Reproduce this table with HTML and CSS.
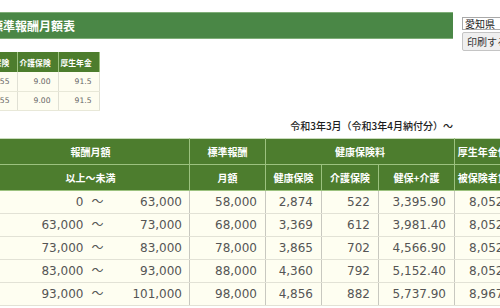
FILE: index.html
```html
<!DOCTYPE html>
<html lang="ja">
<head>
<meta charset="utf-8">
<link rel="stylesheet" href="styles.css">
</head>
<body>
<div class="page">
  <div class="top">
    <div class="title">標準報酬月額表</div>
    <div class="controls">
      <select class="pref"><option>愛知県</option></select>
      <button class="print">印刷する</button>
    </div>
  </div>

  <table class="rates">
    <tr class="rhead"><th>健康保険</th><th>介護保険</th><th>厚生年金</th></tr>
    <tr><td>49.55</td><td>9.00</td><td>91.5</td></tr>
    <tr><td>49.55</td><td>9.00</td><td>91.5</td></tr>
  </table>

  <div class="caption">令和3年3月（令和3年4月納付分）～</div>

  <table class="grade">
    <colgroup>
      <col class="c-a"><col class="c-b"><col class="c-c"><col class="c-d"><col class="c-e"><col class="c-f"><col class="c-g">
    </colgroup>
    <tr class="h1">
      <th colspan="2">報酬月額</th><th>標準報酬</th><th colspan="3">健康保険料</th><th>厚生年金保険料</th>
    </tr>
    <tr class="h2">
      <th colspan="2">以上～未満</th><th>月額</th><th>健康保険</th><th>介護保険</th><th>健保+介護</th><th>被保険者負担分</th>
    </tr>
    <tr><td class="lo">0<span class="t">～</span></td><td class="hi">63,000</td><td>58,000</td><td>2,874</td><td>522</td><td>3,395.90</td><td>8,052.00</td></tr>
    <tr><td class="lo">63,000<span class="t">～</span></td><td class="hi">73,000</td><td>68,000</td><td>3,369</td><td>612</td><td>3,981.40</td><td>8,052.00</td></tr>
    <tr><td class="lo">73,000<span class="t">～</span></td><td class="hi">83,000</td><td>78,000</td><td>3,865</td><td>702</td><td>4,566.90</td><td>8,052.00</td></tr>
    <tr><td class="lo">83,000<span class="t">～</span></td><td class="hi">93,000</td><td>88,000</td><td>4,360</td><td>792</td><td>5,152.40</td><td>8,052.00</td></tr>
    <tr><td class="lo">93,000<span class="t">～</span></td><td class="hi">101,000</td><td>98,000</td><td>4,856</td><td>882</td><td>5,737.90</td><td>8,967.00</td></tr>
  </table>
</div>
</body>
</html>
```

FILE: styles.css
```css
html, body {
  margin: 0;
  padding: 0;
  background: #ffffff;
  overflow: hidden;
}
body {
  font-family: "Noto Sans CJK JP", "DejaVu Sans", sans-serif;
}
.page {
  margin-left: -9px;
  padding-top: 12px;
  width: 560px;
}
.top {
  display: flex;
  align-items: flex-start;
}
.title {
  width: 462px;
  height: 27px;
  line-height: 27px;
  background: #4a8746;
  color: #ffffff;
  font-size: 12px;
  font-weight: bold;
  box-shadow: inset 0 1px 0 #7fae78, inset 0 -1px 0 #7fae78;
}
.controls {
  margin-left: 9px;
  padding-top: 5px;
  display: flex;
  flex-direction: column;
  gap: 2px;
}
.pref {
  appearance: none;
  -webkit-appearance: none;
  width: 64px;
  height: 13px;
  margin: 0;
  padding: 0 2px;
  border: 1px solid #a9a9a9;
  border-radius: 0;
  background: #ffffff;
  font-family: "Noto Sans CJK JP", sans-serif;
  font-size: 10px;
  line-height: 11px;
  color: #222;
}
.print {
  width: 64px;
  height: 19px;
  margin: 0;
  padding: 0 4px;
  border: 1px solid #c4c4c4;
  border-radius: 2px;
  background: #efefef;
  font-family: "Noto Sans CJK JP", sans-serif;
  font-size: 10px;
  color: #333;
  text-align: left;
}

/* small rate table */
.rates {
  margin-top: 1px;
  margin-left: -15px;
  border-collapse: collapse;
}
.rates th {
  width: 41px;
  height: 20px;
  padding: 0 2px;
  background: #4d7d2d;
  color: #ffffff;
  font-size: 7.8px;
  font-weight: bold;
  text-align: left;
  border-right: 1px solid #9cc27f;
  box-sizing: border-box;
}
.rates td {
  height: 19px;
  padding: 0 7px 0 0;
  background: #fefdf0;
  color: #666;
  font-family: "DejaVu Sans", sans-serif;
  font-size: 7.6px;
  text-align: right;
  border-right: 1px solid #e0e0d4;
  border-bottom: 1px solid #e8e8d8;
  box-sizing: border-box;
}

.caption {
  width: 462px;
  margin-top: 9px;
  margin-bottom: 6px;
  text-align: right;
  font-size: 10px;
  line-height: 12px;
  color: #1e1e1e;
  font-weight: 500;
}

/* main grade table */
.grade {
  border-collapse: collapse;
  table-layout: fixed;
  width: 539px;
  border-top: 1px solid #c9dcbc;
}
.c-a { width: 117px; }
.c-b { width: 81px; }
.c-c { width: 76px; }
.c-d { width: 56px; }
.c-e { width: 57px; }
.c-f { width: 76px; }
.c-g { width: 76px; }
.grade th {
  height: 25px;
  padding: 0;
  background: #4d7d2e;
  color: #ffffff;
  font-size: 10px;
  font-weight: bold;
  text-align: center;
  white-space: nowrap;
  overflow: hidden;
  border-left: 1px solid #9cc27f;
  border-bottom: 1px solid #9cc27f;
}
.grade td {
  height: 23px;
  padding: 0 8px 0 0;
  background: #fefef1;
  color: #555;
  font-family: "DejaVu Sans", "Noto Sans CJK JP", sans-serif;
  font-size: 12px;
  line-height: 14px;
  text-align: right;
  white-space: nowrap;
  border-left: 1px solid #c8c8c0;
  border-bottom: 1px solid #e2e2d6;
  box-sizing: border-box;
}
.grade td.lo {
  padding-right: 5px;
}
.grade td.hi {
  border-left: none;
  padding-right: 7px;
}
.t {
  font-family: "Noto Sans CJK JP", sans-serif;
  margin-left: 8px;
}
```
